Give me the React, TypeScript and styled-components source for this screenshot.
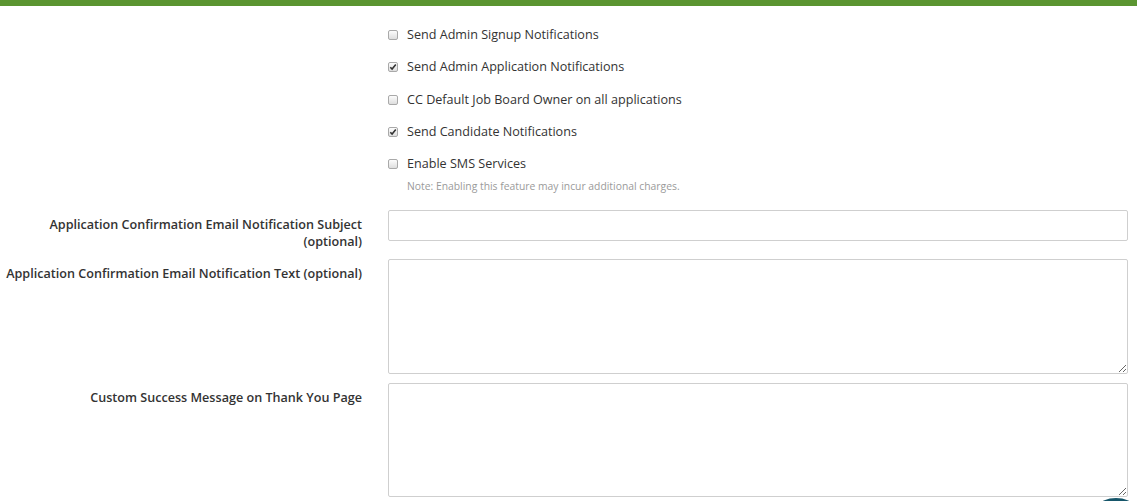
import { createGlobalStyle, styled } from 'styled-components';

const GlobalStyle = createGlobalStyle`
  html, body {
    margin: 0;
    padding: 0;
    background: #fff;
    font-family: "Open Sans", "Liberation Sans", Arial, sans-serif;
    font-size: 12.6px;
    color: #333;
    overflow: hidden;
  }
`;

const TopBar = styled.div`
  height: 6px;
  background: #5b9531;
`;

const Page = styled.main`
  padding: 20px 9px 0 0;
`;

const CheckList = styled.div`
  margin-left: 388px;
  display: flex;
  flex-direction: column;
  gap: 14.3px;
`;

const CheckRow = styled.label`
  display: flex;
  align-items: center;
  gap: 9px;
  height: 18px;
  line-height: 18px;
  color: #333;
  cursor: pointer;
`;

const Box = styled.span`
  box-sizing: border-box;
  width: 10px;
  height: 10px;
  border: 1px solid #a9a9a9;
  border-radius: 2px;
  background: linear-gradient(#fcfcfc, #dedede);
  display: flex;
  align-items: center;
  justify-content: center;
  flex: none;
`;

const Note = styled.div`
  margin: -8px 0 0 19px;
  font-size: 10.35px;
  line-height: 14px;
  color: #9a9a9a;
`;

const Form = styled.div`
  margin-top: 17px;
  display: flex;
  flex-direction: column;
  gap: 9px;
`;

const FieldRow = styled.div`
  display: grid;
  grid-template-columns: 362px 1fr;
  column-gap: 26px;
  align-items: start;
`;

const Label = styled.label`
  text-align: right;
  font-weight: 600;
  line-height: 17px;
  padding-top: 6px;
  color: #333;
`;

const TextInput = styled.input`
  box-sizing: border-box;
  height: 31px;
  width: 100%;
  border: 1px solid #cfcfcf;
  border-radius: 2px;
  padding: 6px 10px;
  font: inherit;
  outline: none;
`;

const TextArea = styled.textarea<{ $height: number }>`
  box-sizing: border-box;
  width: 100%;
  height: ${(p) => p.$height}px;
  border: 1px solid #cfcfcf;
  border-radius: 2px;
  padding: 6px 10px;
  font: inherit;
  resize: vertical;
  outline: none;
  display: block;
`;

const ChatBubble = styled.div`
  position: fixed;
  right: -11px;
  bottom: -61px;
  width: 64px;
  height: 64px;
  border-radius: 50%;
  background: #16566a;
`;

function Check({ checked }: { checked?: boolean }) {
  return (
    <Box>
      {checked && (
        <svg width="8" height="8" viewBox="0 0 8 8">
          <path d="M1.3 4.2 L3.1 6 L6.8 1.6" fill="none" stroke="#333" strokeWidth="1.6" />
        </svg>
      )}
    </Box>
  );
}

const options = [
  { text: 'Send Admin Signup Notifications', checked: false },
  { text: 'Send Admin Application Notifications', checked: true },
  { text: 'CC Default Job Board Owner on all applications', checked: false },
  { text: 'Send Candidate Notifications', checked: true },
  { text: 'Enable SMS Services', checked: false },
];

export default function App() {
  return (
    <>
      <GlobalStyle />
      <TopBar />
      <Page>
        <CheckList>
          {options.map((o) => (
            <CheckRow key={o.text}>
              <Check checked={o.checked} />
              {o.text}
            </CheckRow>
          ))}
          <Note>Note: Enabling this feature may incur additional charges.</Note>
        </CheckList>
        <Form>
          <FieldRow>
            <Label>
              Application Confirmation Email Notification Subject
              <br />
              (optional)
            </Label>
            <TextInput type="text" />
          </FieldRow>
          <FieldRow>
            <Label>Application Confirmation Email Notification Text (optional)</Label>
            <TextArea $height={115} />
          </FieldRow>
          <FieldRow>
            <Label>Custom Success Message on Thank You Page</Label>
            <TextArea $height={114} />
          </FieldRow>
        </Form>
      </Page>
      <ChatBubble />
    </>
  );
}
